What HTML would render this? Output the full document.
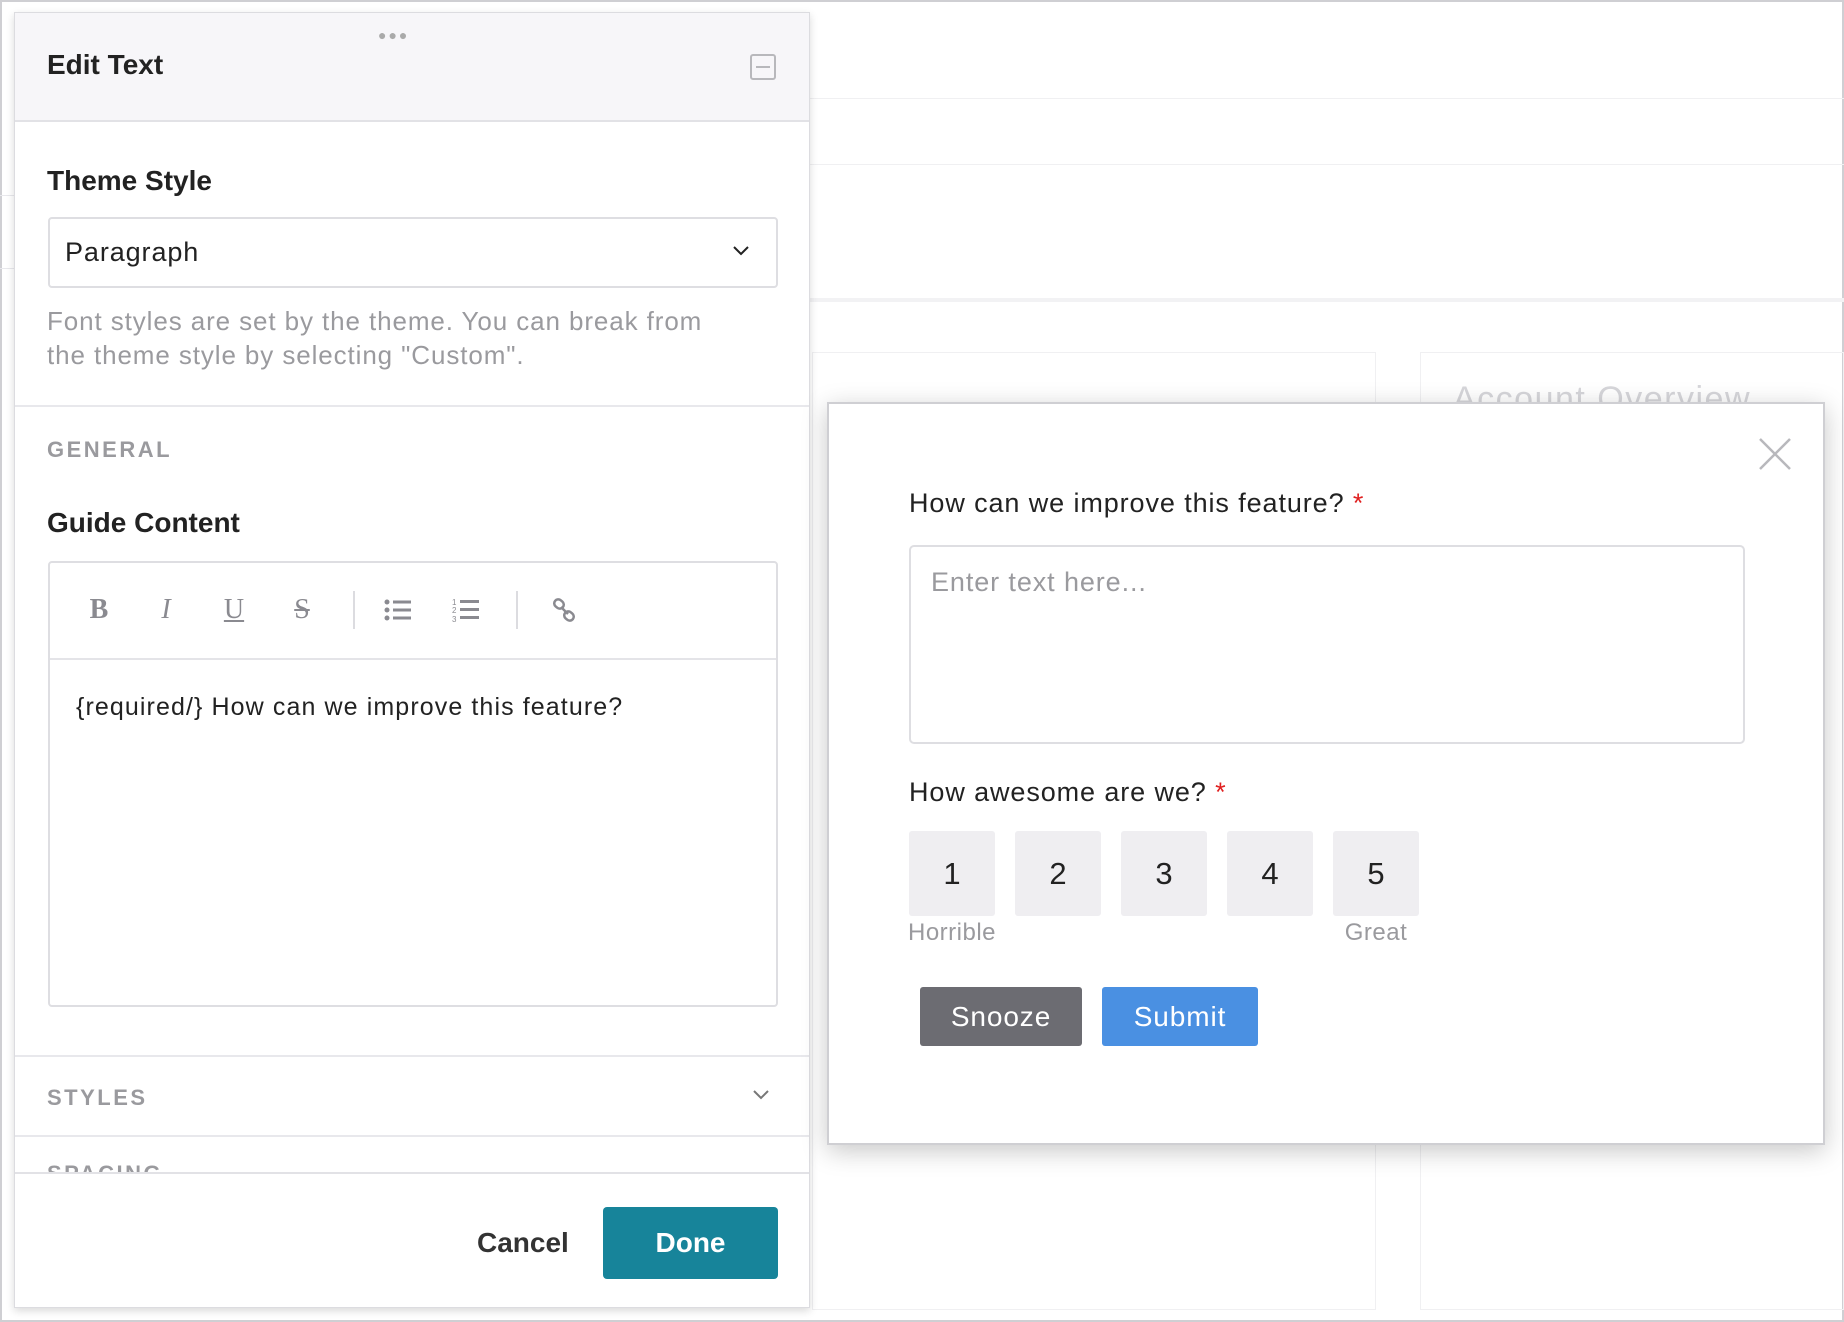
<!DOCTYPE html>
<html><head><meta charset="utf-8"><style>
*{box-sizing:border-box;margin:0;padding:0}
body{width:1844px;height:1322px;background:#fff;position:relative;overflow:hidden;font-family:"Liberation Sans",Arial,sans-serif;color:#222}
.abs{position:absolute}
.frame{left:0;top:0;width:1844px;height:1322px;border:2px solid #cfcfd3}
.panel{left:14px;top:12px;width:796px;height:1296px;background:#fff;border:1px solid #dcdce0;box-shadow:0 3px 8px rgba(0,0,0,.15);overflow:hidden}
.hdr{left:0;top:0;width:100%;height:109px;background:#f7f6f9;border-bottom:2px solid #e2e2e6}
.bold{font-weight:bold;color:#222}
.gray{color:#9a9a9e}
.cap{font-weight:bold;letter-spacing:2.5px;color:#9a9a9e;font-size:22px}
.hr{left:0;width:100%;height:2px;background:#e8e8ec}
.tb{color:#8a8a90;font-size:28px;font-family:"Liberation Serif",serif;text-align:center;width:30px}
.num{width:86px;height:85px;background:#efeef1;border-radius:3px;font-size:31px;text-align:center;line-height:85px;color:#222}
.ls{letter-spacing:0.9px}
</style></head><body>
<div class="abs frame"></div>
<div class="abs" style="left:810px;top:98px;width:1034px;height:1px;background:#f0f0f2"></div>
<div class="abs" style="left:810px;top:164px;width:1034px;height:1px;background:#f0f0f2"></div>
<div class="abs" style="left:810px;top:298px;width:1034px;height:4px;background:#f2f2f4"></div>
<div class="abs" style="left:812px;top:352px;width:564px;height:958px;border:1px solid #f0f0f2"></div>
<div class="abs" style="left:1420px;top:352px;width:424px;height:958px;border:1px solid #f0f0f2"></div>
<div class="abs" style="left:1453px;top:380px;font-size:34px;letter-spacing:1.5px;color:#d6d6da">Account Overview</div>
<div class="abs" style="left:0;top:195px;width:14px;height:1px;background:#e8e8ec"></div>
<div class="abs" style="left:0;top:268px;width:14px;height:1px;background:#e8e8ec"></div>

<div class="abs panel">
  <div class="abs hdr">
    <div class="abs" style="left:363px;top:14px;font-size:14px;letter-spacing:2px;color:#aaa">●●●</div>
    <div class="abs bold" style="left:32px;top:36px;font-size:28px">Edit Text</div>
    <div class="abs" style="left:735px;top:41px;width:26px;height:26px;border:2px solid #b8b8bc;border-radius:3px"><div class="abs" style="left:4px;top:10px;width:14px;height:2px;background:#b8b8bc"></div></div>
  </div>
  <div class="abs bold" style="left:32px;top:152px;font-size:28px">Theme Style</div>
  <div class="abs" style="left:33px;top:204px;width:730px;height:71px;border:2px solid #dedee2;border-radius:4px">
    <div class="abs ls" style="left:15px;top:18px;font-size:27px;color:#222">Paragraph</div>
    <svg class="abs" style="left:682px;top:26px" width="18" height="12" viewBox="0 0 18 12"><path d="M2 2l7 7 7-7" fill="none" stroke="#222" stroke-width="2"/></svg>
  </div>
  <div class="abs gray ls" style="left:32px;top:291px;font-size:26px;line-height:34px;width:675px">Font styles are set by the theme. You can break from the theme style by selecting "Custom".</div>
  <div class="abs hr" style="top:392px"></div>
  <div class="abs cap" style="left:32px;top:424px">GENERAL</div>
  <div class="abs bold" style="left:32px;top:494px;font-size:28px">Guide Content</div>
  <div class="abs" style="left:33px;top:548px;width:730px;height:446px;border:2px solid #dedee2;border-radius:4px">
    <div class="abs" style="left:0;top:95px;width:100%;height:2px;background:#e4e4e8"></div>
    <div class="abs tb" style="left:34px;top:31px;font-weight:bold">B</div>
    <div class="abs tb" style="left:101px;top:31px;font-style:italic">I</div>
    <div class="abs tb" style="left:169px;top:31px;text-decoration:underline">U</div>
    <div class="abs tb" style="left:237px;top:31px;text-decoration:line-through">S</div>
    <div class="abs" style="left:303px;top:28px;width:2px;height:38px;background:#dcdce0"></div>
    <svg class="abs" style="left:334px;top:35px" width="28" height="24" viewBox="0 0 28 24"><g fill="#8a8a90"><circle cx="3" cy="4" r="2.5"/><circle cx="3" cy="12" r="2.5"/><circle cx="3" cy="20" r="2.5"/><rect x="9" y="2.5" width="18" height="3"/><rect x="9" y="10.5" width="18" height="3"/><rect x="9" y="18.5" width="18" height="3"/></g></svg>
    <svg class="abs" style="left:402px;top:34px" width="28" height="26" viewBox="0 0 28 26"><g fill="#8a8a90"><text x="0" y="8" font-size="8" font-family="Liberation Sans">1</text><text x="0" y="16" font-size="8" font-family="Liberation Sans">2</text><text x="0" y="25" font-size="8" font-family="Liberation Sans">3</text><rect x="8" y="3" width="19" height="3"/><rect x="8" y="11" width="19" height="3"/><rect x="8" y="19" width="19" height="3"/></g></svg>
    <div class="abs" style="left:466px;top:28px;width:2px;height:38px;background:#dcdce0"></div>
    <svg class="abs" style="left:502px;top:35px" width="26" height="26" viewBox="0 0 26 26"><g fill="none" stroke="#8a8a90" stroke-width="2.5"><rect x="2" y="2" width="10" height="8" rx="4" transform="rotate(40 7 6)"/><rect x="12" y="14" width="10" height="8" rx="4" transform="rotate(40 17 18)"/><path d="M9 9l7 7"/></g></svg>
    <div class="abs ls" style="left:26px;top:130px;font-size:25px;letter-spacing:1.1px;color:#222">{required/} How can we improve this feature?</div>
  </div>
  <div class="abs hr" style="top:1042px"></div>
  <div class="abs cap" style="left:32px;top:1072px">STYLES</div>
  <svg class="abs" style="left:737px;top:1076px" width="18" height="12" viewBox="0 0 18 12"><path d="M2 2l7 7 7-7" fill="none" stroke="#777" stroke-width="2"/></svg>
  <div class="abs hr" style="top:1122px"></div>
  <div class="abs" style="left:0;top:1150px;width:100%;height:9px;overflow:hidden"><div class="abs cap" style="left:32px;top:-2px">SPACING</div></div>
  <div class="abs" style="left:0;top:1159px;width:100%;height:137px;background:#fff;border-top:2px solid #e2e2e6">
    <div class="abs bold" style="left:462px;top:53px;font-size:28px;color:#333">Cancel</div>
    <div class="abs" style="left:588px;top:33px;width:175px;height:72px;background:#17849a;border-radius:4px;color:#fff;font-weight:bold;font-size:28px;text-align:center;line-height:72px">Done</div>
  </div>
</div>

<div class="abs" style="left:827px;top:402px;width:998px;height:743px;background:#fff;border:2px solid #cfcfd3;box-shadow:0 6px 24px rgba(0,0,0,.22)">
  <svg class="abs" style="left:929px;top:33px" width="34" height="34" viewBox="0 0 34 34"><path d="M2 2l30 30M32 2L2 32" stroke="#b8b8bc" stroke-width="2.5" fill="none"/></svg>
  <div class="abs ls" style="left:80px;top:84px;font-size:27px;color:#222">How can we improve this feature? <span style="color:#e02020">*</span></div>
  <div class="abs" style="left:80px;top:141px;width:836px;height:199px;border:2px solid #dedee2;border-radius:5px">
    <div class="abs ls" style="left:20px;top:20px;font-size:27px;color:#9a9a9e">Enter text here...</div>
  </div>
  <div class="abs ls" style="left:80px;top:373px;font-size:27px;color:#222">How awesome are we? <span style="color:#e02020">*</span></div>
  <div class="abs num" style="left:80px;top:427px">1</div>
  <div class="abs num" style="left:186px;top:427px">2</div>
  <div class="abs num" style="left:292px;top:427px">3</div>
  <div class="abs num" style="left:398px;top:427px">4</div>
  <div class="abs num" style="left:504px;top:427px">5</div>
  <div class="abs" style="left:70px;top:515px;width:106px;text-align:center;font-size:24px;letter-spacing:0.5px;color:#9a9a9e">Horrible</div>
  <div class="abs" style="left:494px;top:515px;width:106px;text-align:center;font-size:24px;letter-spacing:0.5px;color:#9a9a9e">Great</div>
  <div class="abs ls" style="left:91px;top:583px;width:162px;height:59px;background:#6c6c72;border-radius:3px;color:#fff;font-size:28px;text-align:center;line-height:59px">Snooze</div>
  <div class="abs ls" style="left:273px;top:583px;width:156px;height:59px;background:#4a90e2;border-radius:3px;color:#fff;font-size:28px;text-align:center;line-height:59px">Submit</div>
</div>
</body></html>
